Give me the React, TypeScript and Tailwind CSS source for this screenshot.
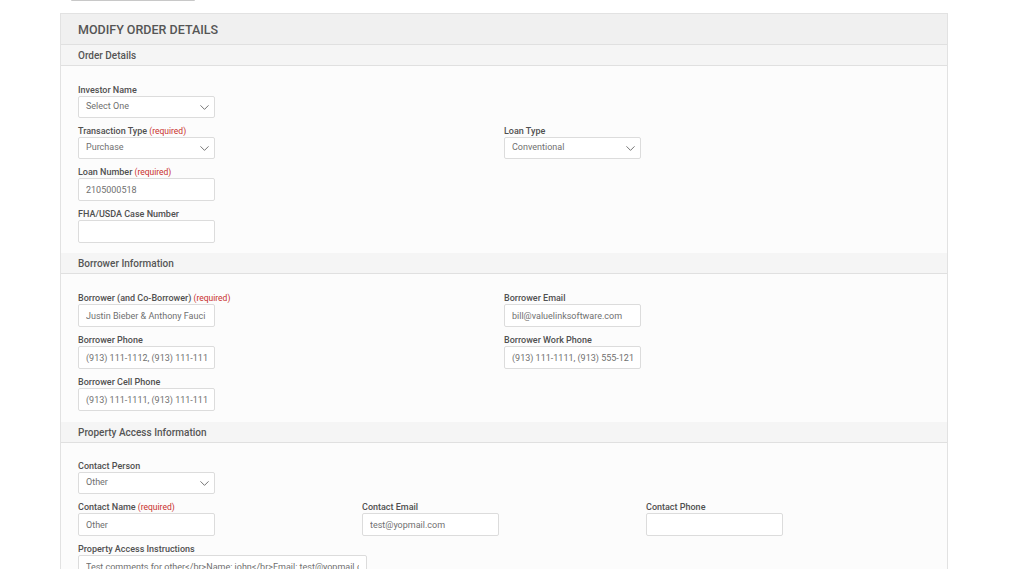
import { ChevronDown } from 'lucide-react';

function Label({ text, required }: { text: string; required?: boolean }) {
  return (
    <div className="h-[12px] text-[9px] leading-[12px] font-medium text-[#505050] whitespace-nowrap">
      {text}
      {required && <span className="text-[#c9302c] font-normal text-[8.5px]"> (required)</span>}
    </div>
  );
}

function SelectField({ label, value, required }: { label: string; value: string; required?: boolean }) {
  return (
    <div className="mb-[7px]">
      <Label text={label} required={required} />
      <div className="w-[137px] h-[22px] border border-[#dcdcdc] rounded-[2px] bg-white flex items-center justify-between pl-[7px] pr-[2px]">
        <span className="text-[9px] text-[#707070]">{value}</span>
        <ChevronDown size={15} strokeWidth={1.3} className="text-[#555]" />
      </div>
    </div>
  );
}

function InputField({ label, value = '', required, wide }: { label: string; value?: string; required?: boolean; wide?: boolean }) {
  return (
    <div className="mb-[7px]">
      <Label text={label} required={required} />
      <input
        readOnly
        value={value}
        className={`${wide ? 'w-[289px]' : 'w-[137px]'} h-[23px] border border-[#dcdcdc] rounded-[2px] bg-white px-[7px] text-[9px] text-[#707070] outline-none block`}
      />
    </div>
  );
}

function SectionHeader({ title }: { title: string }) {
  return (
    <div className="h-[21px] bg-[#f5f5f5] border-b border-[#e0e0e0] px-[17px] flex items-center text-[10px] font-medium text-[#555]">
      {title}
    </div>
  );
}

export default function App() {
  return (
    <div className="min-h-screen bg-white font-['Roboto',sans-serif]">
      <div className="ml-[71px] w-[124px] h-[1px] bg-[#c8c8c8] rounded-b" />
      <div className="mt-[12px] ml-[60px] w-[888px] border border-[#e2e2e2] bg-[#fcfcfc]">
        <div className="h-[31px] bg-[#f0f0f0] border-b border-[#e0e0e0] px-[17px] pt-[2px] flex items-center text-[12.5px] font-medium text-[#555] uppercase">
          Modify Order Details
        </div>

        <SectionHeader title="Order Details" />
        <div className="pt-[18px] pb-[3px] px-[17px]">
          <SelectField label="Investor Name" value="Select One" />
          <div className="grid grid-cols-2">
            <SelectField label="Transaction Type" value="Purchase" required />
            <SelectField label="Loan Type" value="Conventional" />
          </div>
          <InputField label="Loan Number" value="2105000518" required />
          <InputField label="FHA/USDA Case Number" />
        </div>

        <SectionHeader title="Borrower Information" />
        <div className="pt-[18px] pb-[4px] px-[17px]">
          <div className="grid grid-cols-2">
            <InputField label="Borrower (and Co-Borrower)" value="Justin Bieber & Anthony Fauci" required />
            <InputField label="Borrower Email" value="bill@valuelinksoftware.com" />
            <InputField label="Borrower Phone" value="(913) 111-1112, (913) 111-1113" />
            <InputField label="Borrower Work Phone" value="(913) 111-1111, (913) 555-1212" />
            <InputField label="Borrower Cell Phone" value="(913) 111-1111, (913) 111-1112" />
          </div>
        </div>

        <SectionHeader title="Property Access Information" />
        <div className="pt-[17px] pb-[4px] px-[17px]">
          <SelectField label="Contact Person" value="Other" />
          <div className="grid grid-cols-3">
            <InputField label="Contact Name" value="Other" required />
            <InputField label="Contact Email" value="test@yopmail.com" />
            <InputField label="Contact Phone" />
          </div>
          <InputField label="Property Access Instructions" value="Test comments for other</br>Name: john</br>Email: test@yopmail.com" wide />
        </div>
      </div>
    </div>
  );
}
